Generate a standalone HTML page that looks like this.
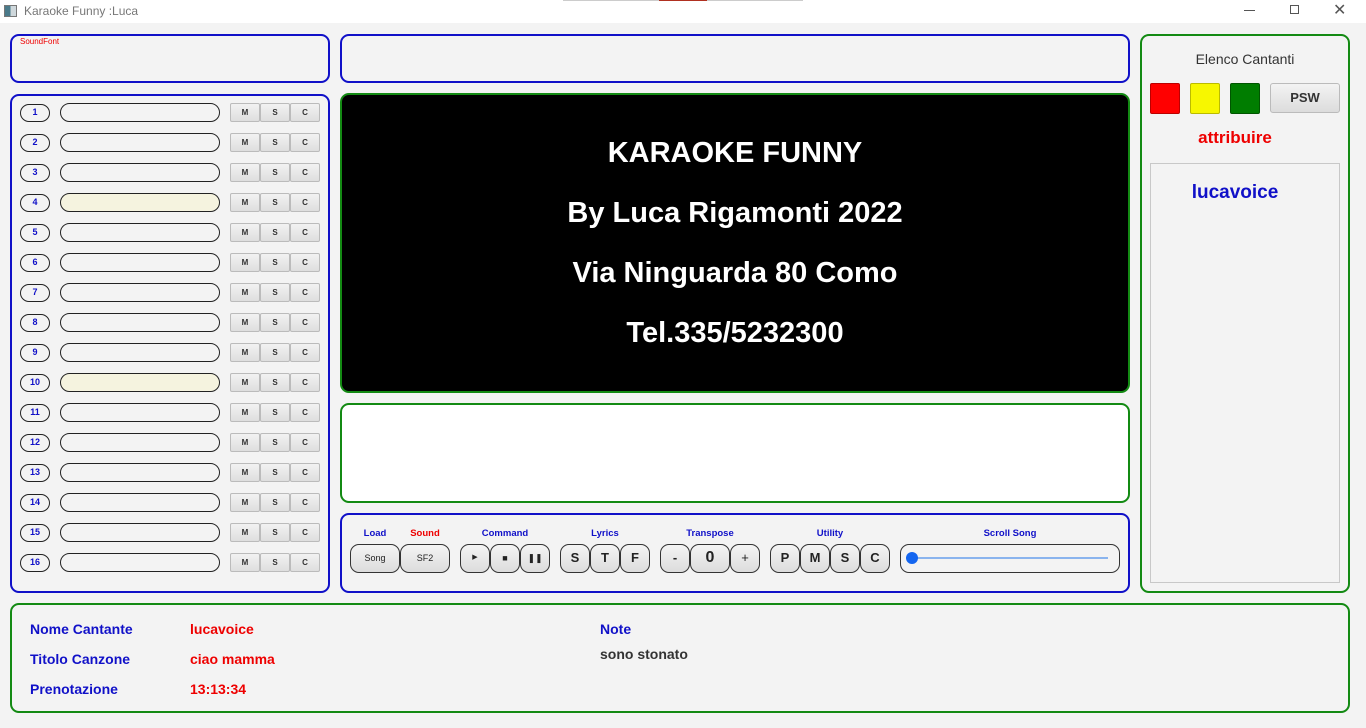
<!DOCTYPE html>
<html><head><meta charset="utf-8"><style>
*{box-sizing:border-box;margin:0;padding:0}
body{width:1366px;height:728px;background:#f3f3f3;font-family:"Liberation Sans","DejaVu Sans",sans-serif;position:relative;overflow:hidden}
.a{position:absolute}
.tb{left:0;top:0;width:1366px;height:23px;background:#fff}
.box{position:absolute;border-radius:9px;border:2px solid #1010c8}
.g{border-color:#138a13}
.num{position:absolute;left:20px;width:30px;height:18px;border:1.5px solid #222;border-radius:9px;color:#1010c8;font-size:9px;font-weight:bold;text-align:center;line-height:15px;background:#f3f3f3}
.pill{position:absolute;left:60px;width:160px;height:19px;border:1.5px solid #222;border-radius:10px;background:#f3f3f3}
.y{background:#f5f3df}
.b{position:absolute;width:30px;height:19px;border:1px solid #bbb;background:linear-gradient(#f2f2f2,#dedede);border-radius:2px;font-size:8px;font-weight:bold;color:#333;text-align:center;line-height:17px}
.lbl{position:absolute;top:528px;font-size:9.5px;font-weight:bold;color:#1010c8;text-align:center}
.cb{position:absolute;top:544px;height:29px;border:1.5px solid #333;border-radius:9px;background:linear-gradient(#f4f4f4,#dcdcdc);text-align:center;line-height:26px;font-size:13px;font-weight:bold;color:#222}
.bl{position:absolute;font-size:14px;font-weight:bold;color:#1010c8}
.rd{position:absolute;font-size:14px;font-weight:bold;color:#e00}
.disp{color:#fff;font-weight:bold;font-size:29px;text-align:center;width:786px;left:342px}
</style></head><body>
<div class="a tb"></div>
<div class="a" style="left:4px;top:5px;width:13px;height:12px;border:1px solid #777;background:linear-gradient(90deg,#4a7a8a 50%,#cfd8dc 50%)"></div>
<div class="a" style="left:24px;top:4px;font-size:12px;color:#777">Karaoke Funny :Luca</div>
<div class="a" style="left:563px;top:0;width:240px;height:1px;background:#ccc"></div>
<div class="a" style="left:659px;top:0;width:48px;height:1px;background:#b03020"></div>
<div class="a" style="left:1244px;top:10px;width:11px;height:1px;background:#555"></div>
<div class="a" style="left:1290px;top:5px;width:9px;height:9px;border:1px solid #555"></div>
<div class="a" style="left:1333px;top:0px;font-size:16px;color:#555">✕</div>

<div class="box" style="left:10px;top:34px;width:320px;height:49px"></div>
<div class="a" style="left:20px;top:37px;font-size:8px;color:#e00">SoundFont</div>
<div class="box" style="left:340px;top:34px;width:790px;height:49px"></div>
<div class="box" style="left:10px;top:94px;width:320px;height:499px"></div>

<div class="num" style="top:104px">1</div><div class="pill" style="top:103px"></div><div class="b" style="left:230px;top:103px">M</div><div class="b" style="left:260px;top:103px">S</div><div class="b" style="left:290px;top:103px">C</div>
<div class="num" style="top:134px">2</div><div class="pill" style="top:133px"></div><div class="b" style="left:230px;top:133px">M</div><div class="b" style="left:260px;top:133px">S</div><div class="b" style="left:290px;top:133px">C</div>
<div class="num" style="top:164px">3</div><div class="pill" style="top:163px"></div><div class="b" style="left:230px;top:163px">M</div><div class="b" style="left:260px;top:163px">S</div><div class="b" style="left:290px;top:163px">C</div>
<div class="num" style="top:194px">4</div><div class="pill y" style="top:193px"></div><div class="b" style="left:230px;top:193px">M</div><div class="b" style="left:260px;top:193px">S</div><div class="b" style="left:290px;top:193px">C</div>
<div class="num" style="top:224px">5</div><div class="pill" style="top:223px"></div><div class="b" style="left:230px;top:223px">M</div><div class="b" style="left:260px;top:223px">S</div><div class="b" style="left:290px;top:223px">C</div>
<div class="num" style="top:254px">6</div><div class="pill" style="top:253px"></div><div class="b" style="left:230px;top:253px">M</div><div class="b" style="left:260px;top:253px">S</div><div class="b" style="left:290px;top:253px">C</div>
<div class="num" style="top:284px">7</div><div class="pill" style="top:283px"></div><div class="b" style="left:230px;top:283px">M</div><div class="b" style="left:260px;top:283px">S</div><div class="b" style="left:290px;top:283px">C</div>
<div class="num" style="top:314px">8</div><div class="pill" style="top:313px"></div><div class="b" style="left:230px;top:313px">M</div><div class="b" style="left:260px;top:313px">S</div><div class="b" style="left:290px;top:313px">C</div>
<div class="num" style="top:344px">9</div><div class="pill" style="top:343px"></div><div class="b" style="left:230px;top:343px">M</div><div class="b" style="left:260px;top:343px">S</div><div class="b" style="left:290px;top:343px">C</div>
<div class="num" style="top:374px">10</div><div class="pill y" style="top:373px"></div><div class="b" style="left:230px;top:373px">M</div><div class="b" style="left:260px;top:373px">S</div><div class="b" style="left:290px;top:373px">C</div>
<div class="num" style="top:404px">11</div><div class="pill" style="top:403px"></div><div class="b" style="left:230px;top:403px">M</div><div class="b" style="left:260px;top:403px">S</div><div class="b" style="left:290px;top:403px">C</div>
<div class="num" style="top:434px">12</div><div class="pill" style="top:433px"></div><div class="b" style="left:230px;top:433px">M</div><div class="b" style="left:260px;top:433px">S</div><div class="b" style="left:290px;top:433px">C</div>
<div class="num" style="top:464px">13</div><div class="pill" style="top:463px"></div><div class="b" style="left:230px;top:463px">M</div><div class="b" style="left:260px;top:463px">S</div><div class="b" style="left:290px;top:463px">C</div>
<div class="num" style="top:494px">14</div><div class="pill" style="top:493px"></div><div class="b" style="left:230px;top:493px">M</div><div class="b" style="left:260px;top:493px">S</div><div class="b" style="left:290px;top:493px">C</div>
<div class="num" style="top:524px">15</div><div class="pill" style="top:523px"></div><div class="b" style="left:230px;top:523px">M</div><div class="b" style="left:260px;top:523px">S</div><div class="b" style="left:290px;top:523px">C</div>
<div class="num" style="top:554px">16</div><div class="pill" style="top:553px"></div><div class="b" style="left:230px;top:553px">M</div><div class="b" style="left:260px;top:553px">S</div><div class="b" style="left:290px;top:553px">C</div>

<div class="box g" style="left:340px;top:93px;width:790px;height:300px;background:#000"></div>
<div class="a disp" style="top:137px">KARAOKE FUNNY</div>
<div class="a disp" style="top:197px">By Luca Rigamonti 2022</div>
<div class="a disp" style="top:257px">Via Ninguarda 80 Como</div>
<div class="a disp" style="top:317px">Tel.335/5232300</div>

<div class="box g" style="left:340px;top:403px;width:790px;height:100px;background:#fff"></div>
<div class="box" style="left:340px;top:513px;width:790px;height:80px"></div>
<div class="lbl" style="left:350px;width:50px">Load</div>
<div class="lbl" style="left:400px;width:50px;color:#e00">Sound</div>
<div class="lbl" style="left:460px;width:90px">Command</div>
<div class="lbl" style="left:560px;width:90px">Lyrics</div>
<div class="lbl" style="left:660px;width:100px">Transpose</div>
<div class="lbl" style="left:770px;width:120px">Utility</div>
<div class="lbl" style="left:900px;width:220px">Scroll Song</div>
<div class="cb" style="left:350px;width:50px;font-size:9px;font-weight:normal">Song</div>
<div class="cb" style="left:400px;width:50px;font-size:9px;font-weight:normal">SF2</div>
<div class="cb" style="left:460px;width:30px;font-size:7px">▶</div>
<div class="cb" style="left:490px;width:30px;font-size:9px">■</div>
<div class="cb" style="left:520px;width:30px;font-size:9px">❚❚</div>
<div class="cb" style="left:560px;width:30px">S</div>
<div class="cb" style="left:590px;width:30px">T</div>
<div class="cb" style="left:620px;width:30px">F</div>
<div class="cb" style="left:660px;width:30px">-</div>
<div class="cb" style="left:690px;width:40px;font-size:16px">0</div>
<div class="cb" style="left:730px;width:30px;font-weight:normal">+</div>
<div class="cb" style="left:770px;width:30px">P</div>
<div class="cb" style="left:800px;width:30px">M</div>
<div class="cb" style="left:830px;width:30px">S</div>
<div class="cb" style="left:860px;width:30px">C</div>
<div class="a" style="left:900px;top:544px;width:220px;height:29px;border:1.5px solid #333;border-radius:9px;background:#f3f3f3"></div>
<div class="a" style="left:910px;top:557px;width:198px;height:2px;background:#8ab4ee"></div>
<div class="a" style="left:906px;top:552px;width:12px;height:12px;border-radius:50%;background:#1466f0"></div>

<div class="box g" style="left:1140px;top:34px;width:210px;height:559px"></div>
<div class="a" style="left:1140px;top:51px;width:210px;text-align:center;font-size:14px;color:#333">Elenco Cantanti</div>
<div class="a" style="left:1150px;top:83px;width:30px;height:31px;background:#f00;border:1px solid #b00;border-radius:2px"></div>
<div class="a" style="left:1190px;top:83px;width:30px;height:31px;background:#f7f700;border:1px solid #bb0;border-radius:2px"></div>
<div class="a" style="left:1230px;top:83px;width:30px;height:31px;background:#007d00;border:1px solid #050;border-radius:2px"></div>
<div class="a" style="left:1270px;top:83px;width:70px;height:30px;border:1px solid #bbb;border-radius:3px;background:linear-gradient(#f3f3f3,#dcdcdc);text-align:center;line-height:28px;font-size:13px;font-weight:bold;color:#333">PSW</div>
<div class="a" style="left:1140px;top:128px;width:190px;text-align:center;font-size:17px;font-weight:bold;color:#e00">attribuire</div>
<div class="a" style="left:1150px;top:163px;width:190px;height:420px;border:1px solid #c8c8c8"></div>
<div class="a" style="left:1150px;top:182px;width:170px;text-align:center;font-size:19px;font-weight:bold;color:#1010c8">lucavoice</div>

<div class="box g" style="left:10px;top:603px;width:1340px;height:110px"></div>
<div class="bl" style="left:30px;top:621px">Nome Cantante</div>
<div class="bl" style="left:30px;top:651px">Titolo Canzone</div>
<div class="bl" style="left:30px;top:681px">Prenotazione</div>
<div class="rd" style="left:190px;top:621px">lucavoice</div>
<div class="rd" style="left:190px;top:651px">ciao mamma</div>
<div class="rd" style="left:190px;top:681px">13:13:34</div>
<div class="bl" style="left:600px;top:621px">Note</div>
<div class="a" style="left:600px;top:646px;font-size:14px;font-weight:bold;color:#333">sono stonato</div>
</body></html>
